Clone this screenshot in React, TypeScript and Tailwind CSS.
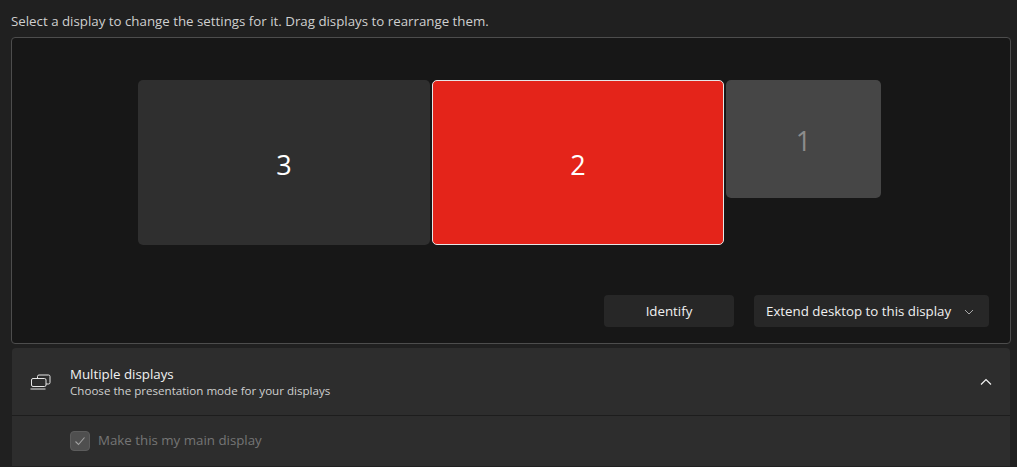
import React from 'react';

function MultipleDisplaysIcon() {
  return (
    <svg width="21" height="16" viewBox="0 0 21 16" fill="none" stroke="#e6e6e6" strokeWidth="1">
      <path d="M7.5 4V2.5A1.5 1.5 0 0 1 9 1h9.5A1.5 1.5 0 0 1 20 2.5v6a1.5 1.5 0 0 1-1.5 1.5H16" />
      <rect x="1.5" y="4.5" width="14.5" height="8" rx="1.5" />
      <path d="M0.5 15H15.5" />
    </svg>
  );
}

function Display({ label, className }: { label: string; className: string }) {
  return (
    <div className={`flex items-center justify-center rounded-[5px] pt-[5px] text-[27px] ${className}`}>
      {label}
    </div>
  );
}

export default function App() {
  return (
    <div className="h-[467px] w-[1017px] overflow-hidden bg-[#202020] font-['Open_Sans','Noto_Sans',sans-serif] text-white">
      <p className="px-[11px] pt-[12px] pb-[7px] text-[13.3px] leading-[18px] text-[#cfcfcf]">
        Select a display to change the settings for it. Drag displays to rearrange them.
      </p>

      <div className="mx-[11px] flex h-[307px] w-[1000px] flex-col rounded-[4px] border border-[#4d4d4d] bg-[#171717]">
        <div className="flex gap-[2px] pt-[42px] pl-[126px]">
          <Display label="3" className="h-[165px] w-[292px] bg-[#2f2f2f]" />
          <Display label="2" className="h-[165px] w-[292px] border border-[#e6e6e6] bg-[#e4241a]" />
          <Display label="1" className="h-[118px] w-[155px] bg-[#464646] text-[#8c8c8c]" />
        </div>
        <div className="mt-[50px] flex justify-end gap-[20px] pr-[21px]">
          <button className="h-[32px] w-[130px] rounded-[4px] bg-[#272727] pt-px text-[13.3px] text-[#f0f0f0]">Identify</button>
          <button className="flex h-[32px] w-[235px] items-center justify-between rounded-[4px] bg-[#272727] pt-px pr-[15px] pl-[12px] text-[13.3px] text-[#f0f0f0]">
            Extend desktop to this display
            <svg width="10" height="6" viewBox="0 0 10 6" fill="none" stroke="#a8a8a8" strokeWidth="1">
              <path d="M1 1l4 4 4-4" />
            </svg>
          </button>
        </div>
      </div>

      <div className="mx-[12px] mt-[4px] w-[998px] overflow-hidden rounded-t-[4px] bg-[#2d2d2d]">
        <div className="flex h-[68px] items-center border-b border-[#1d1d1d] pr-[18px] pl-[18px]">
          <MultipleDisplaysIcon />
          <div className="ml-[19px] flex-1 pt-px">
            <div className="text-[13.3px] leading-[18px] text-[#f2f2f2]">Multiple displays</div>
            <div className="text-[11.6px] leading-[16px] text-[#cfcfcf]">Choose the presentation mode for your displays</div>
          </div>
          <svg width="12" height="8" viewBox="0 0 12 8" fill="none" stroke="#f2f2f2" strokeWidth="1.2">
            <path d="M1 6.5l5-5 5 5" />
          </svg>
        </div>
        <div className="flex h-[50px] items-center gap-[8px] pl-[58px] text-[13.3px] text-[#757575]">
          <div className="flex h-[20px] w-[20px] items-center justify-center rounded-[4px] border border-[#5c5c5c] bg-[#4f4f4f]">
            <svg width="12" height="10" viewBox="0 0 12 10" fill="none" stroke="#a0a0a0" strokeWidth="1.1">
              <path d="M1.5 5.5l3 3 6-7" />
            </svg>
          </div>
          Make this my main display
        </div>
      </div>
    </div>
  );
}
